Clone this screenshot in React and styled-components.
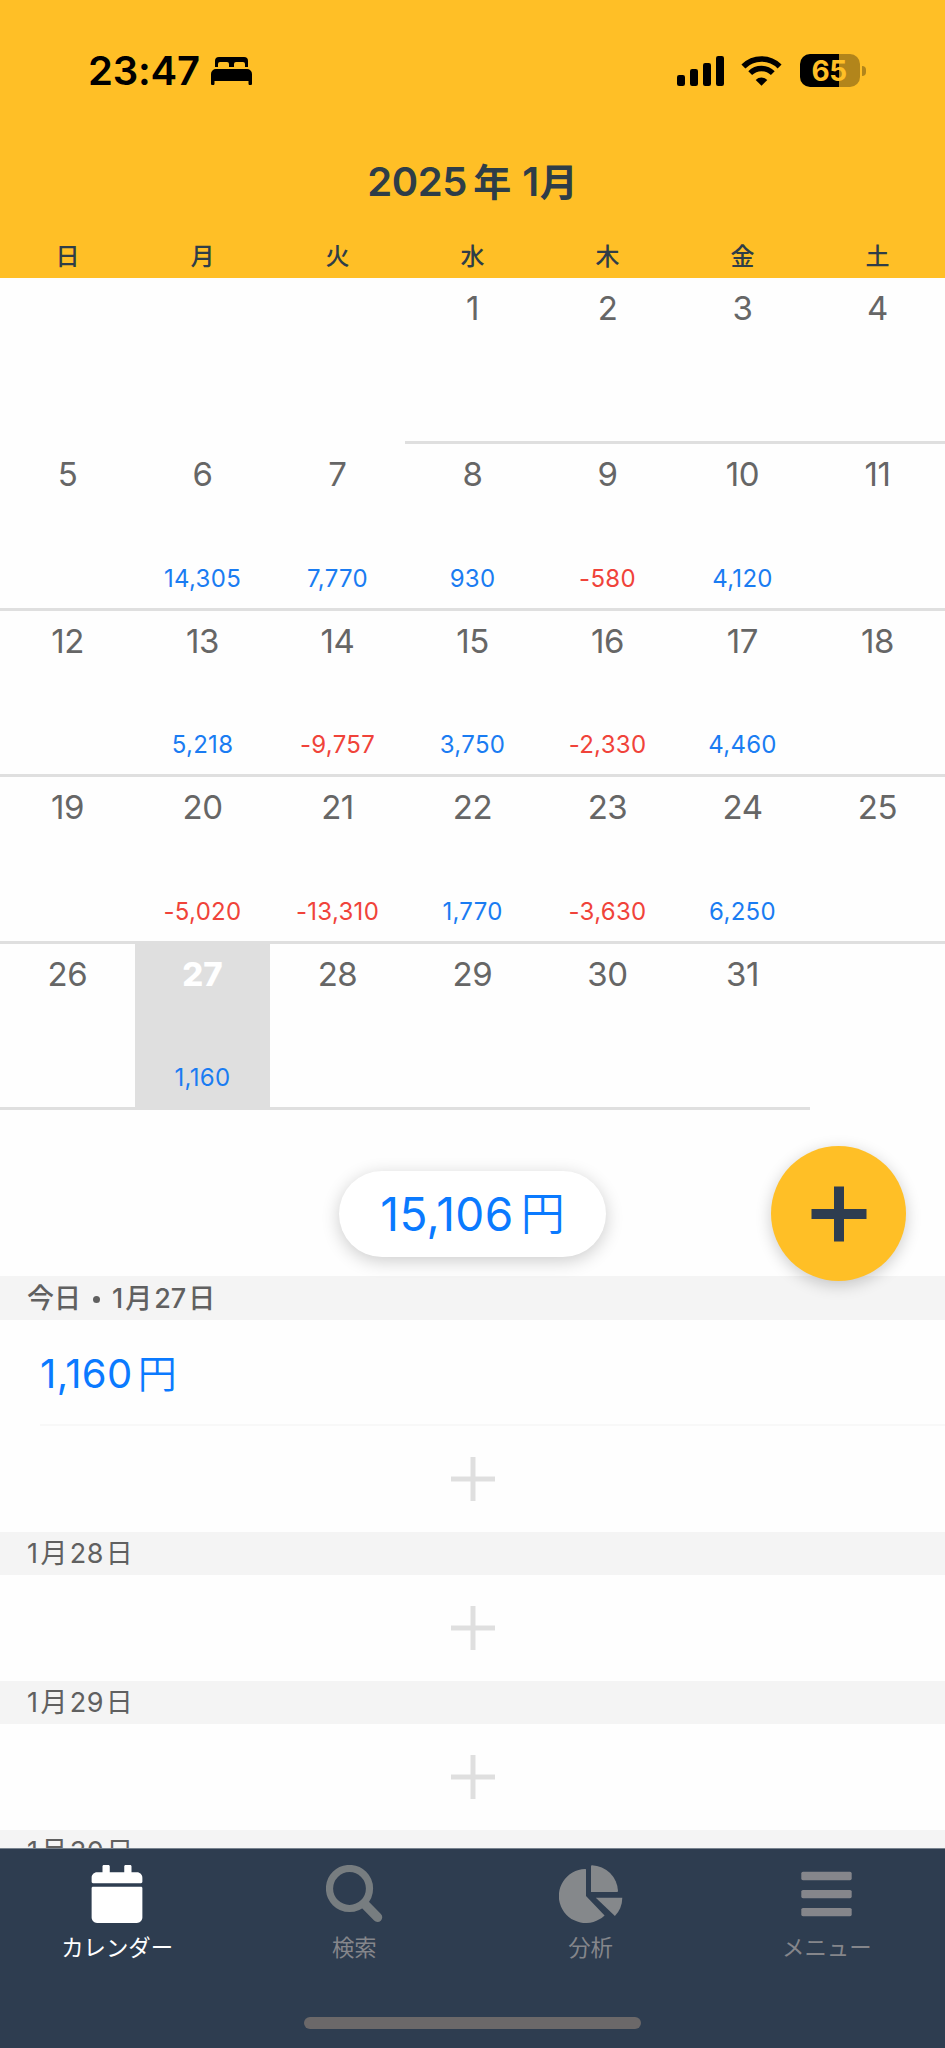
import React from 'react'
import styled, { createGlobalStyle } from 'styled-components'
import { FaCalendar } from 'react-icons/fa'

const weekdays = ['日', '月', '火', '水', '木', '金', '土']

const amounts = {
  6: 14305,
  7: 7770,
  8: 930,
  9: -580,
  10: 4120,
  13: 5218,
  14: -9757,
  15: 3750,
  16: -2330,
  17: 4460,
  20: -5020,
  21: -13310,
  22: 1770,
  23: -3630,
  24: 6250,
  27: 1160,
}

const today = 27
const firstWeekday = 3
const daysInMonth = 31

const cells = Array.from({ length: 35 }, (_, i) => {
  const day = i - firstWeekday + 1
  return day >= 1 && day <= daysInMonth ? day : null
})

const format = (n) => n.toLocaleString('en-US')

const BedIcon = () => (
  <svg width="41" height="28" viewBox="0 0 41 28">
    <path d="M4 10V4a4 4 0 0 1 4-4h25a4 4 0 0 1 4 4v6h-3V7a2 2 0 0 0-2-2h-7a2 2 0 0 0-2 2v3h-5V7a2 2 0 0 0-2-2H9a2 2 0 0 0-2 2v3z" />
    <path d="M0 17a5 5 0 0 1 5-5h31a5 5 0 0 1 5 5v9.500a1.500 1.500 0 0 1-3.500 0V24h-34v2.500a1.500 1.500 0 0 1-3.500 0z" />
  </svg>
)

const SignalIcon = () => (
  <svg width="47" height="30" viewBox="0 0 47 30">
    <rect x="0" y="19" width="8" height="11" rx="2.200" />
    <rect x="13" y="13" width="8" height="17" rx="2.200" />
    <rect x="26" y="7" width="8" height="23" rx="2.200" />
    <rect x="39" y="0" width="8" height="30" rx="2.200" />
  </svg>
)

const WifiIcon = () => (
  <svg width="41" height="30" viewBox="0 0 41 30">
    <path d="M2.400 10.400a25.700 25.700 0 0 1 36.200 0" fill="none" stroke="#000" strokeWidth="5.600" />
    <path d="M9.200 17.200a16 16 0 0 1 22.600 0" fill="none" stroke="#000" strokeWidth="5.400" />
    <path d="M20.500 29.800l-5.800-5.800a8.200 8.200 0 0 1 11.600 0z" />
  </svg>
)

const SearchIcon = () => (
  <svg width="57" height="58" viewBox="0 0 57 58" fill="none" stroke="#777d80">
    <circle cx="23.500" cy="23.500" r="20" strokeWidth="7.200" />
    <path d="M38.500 39L51.500 52.300" strokeWidth="9.500" strokeLinecap="round" />
  </svg>
)

const PieIcon = () => (
  <svg width="64" height="58" viewBox="0 0 64 58" fill="#85888b">
    <path d="M27 4.200V31l18.600 19.400A27 27 0 1 1 26 4z" />
    <path d="M32 1.200a1 1 0 0 1 1-1A27 27 0 0 1 59 26a1 1 0 0 1-1 1H32z" />
    <path d="M36.800 32.700h26.500a27 27 0 0 1-7.400 18.300z" />
  </svg>
)

const MenuIcon = () => (
  <svg width="51" height="58" viewBox="0 0 51 58" fill="#85868b">
    <rect x="0.300" y="6.800" width="50.400" height="8.400" rx="1.700" />
    <rect x="0.300" y="24.900" width="50.400" height="8.400" rx="1.700" />
    <rect x="0.300" y="42.900" width="50.400" height="8.400" rx="1.700" />
  </svg>
)

const StatusBar = () => (
  <Status>
    <StatusLeft>
      <Clock>23:47</Clock>
      <BedIcon />
    </StatusLeft>
    <StatusRight>
      <SignalIcon />
      <WifiIcon />
      <BatteryWrap>
        <Battery>65</Battery>
        <BatteryTip />
      </BatteryWrap>
    </StatusRight>
  </Status>
)

const Calendar = () => (
  <Grid>
    {cells.map((day, i) => (
      <Cell key={i} $filled={day !== null} $today={day === today}>
        <DayNumber $today={day === today}>{day}</DayNumber>
        {amounts[day] && <Amount $minus={amounts[day] < 0}>{format(amounts[day])}</Amount>}
      </Cell>
    ))}
  </Grid>
)

const DateLabel = ({ day }) => (
  <>
    1<Kanji>月</Kanji>
    {day}
    <Kanji>日</Kanji>
  </>
)

const App = () => {
  return (
    <Screen>
      <GlobalStyle />
      <Header>
        <StatusBar />
        <Title>
          2025<TitleYear>年</TitleYear>1<TitleMonth>月</TitleMonth>
        </Title>
        <Weekdays>
          {weekdays.map((d) => (
            <span key={d}>{d}</span>
          ))}
        </Weekdays>
      </Header>
      <Calendar />
      <TotalArea>
        <Total>
          15,106<TotalYen>円</TotalYen>
        </Total>
        <AddButton>
          <svg width="56" height="56" viewBox="0 0 56 56" stroke="#2e3d50" strokeWidth="10">
            <path d="M28 0.500v55M0.500 28h55" />
          </svg>
        </AddButton>
      </TotalArea>
      <List>
        <SectionTitle $today>
          今日<Dot />
          <DateLabel day={27} />
        </SectionTitle>
        <Entry>
          1,160<EntryYen>円</EntryYen>
        </Entry>
        <AddRow />
        <SectionTitle>
          <DateLabel day={28} />
        </SectionTitle>
        <AddRow />
        <SectionTitle>
          <DateLabel day={29} />
        </SectionTitle>
        <AddRow />
        <SectionTitle>
          <DateLabel day={30} />
        </SectionTitle>
      </List>
      <TabBar>
        <Tabs>
          <Tab $active>
            <FaCalendar size={58} />
            <span>カレンダー</span>
          </Tab>
          <Tab>
            <SearchIcon />
            <span>検索</span>
          </Tab>
          <Tab>
            <PieIcon />
            <span>分析</span>
          </Tab>
          <Tab>
            <MenuIcon />
            <span>メニュー</span>
          </Tab>
        </Tabs>
        <HomeIndicator />
      </TabBar>
    </Screen>
  )
}

const AddRow = () => (
  <EmptyRow>
    <svg width="44" height="44" viewBox="0 0 44 44" stroke="#dfdfdf" strokeWidth="5">
      <path d="M22 0v44M0 22h44" />
    </svg>
  </EmptyRow>
)

const GlobalStyle = createGlobalStyle`
  * {
    box-sizing: border-box;
  }
  body {
    margin: 0;
    background: #fefefe;
    font-family: Inter, 'Noto Sans CJK JP', sans-serif;
  }
  svg {
    display: block;
    flex-shrink: 0;
  }
`

const Screen = styled.div`
  display: flex;
  flex-direction: column;
  width: 945px;
  height: 2048px;
  overflow: hidden;
  background: #fefefe;
`

const Header = styled.header`
  display: flex;
  flex-direction: column;
  flex-shrink: 0;
  height: 278px;
  background: #ffbf26;
  color: #2e3d48;
`

const Status = styled.div`
  display: flex;
  flex-shrink: 0;
  justify-content: space-between;
  align-items: center;
  height: 141px;
  padding: 0 79px 0 88px;
  color: #000;
`

const StatusLeft = styled.div`
  display: flex;
  align-items: center;
  gap: 12px;
`

const Clock = styled.span`
  width: 111px;
  font-size: 40px;
  font-weight: 600;
  letter-spacing: -0.2px;
  line-height: 1;
  white-space: nowrap;
`

const StatusRight = styled.div`
  display: flex;
  align-items: center;
  gap: 17px;
`

const BatteryWrap = styled.div`
  display: flex;
  align-items: center;
  gap: 2px;
  margin-left: 1px;
`

const Battery = styled.span`
  display: flex;
  align-items: center;
  justify-content: center;
  width: 60px;
  height: 33px;
  border-radius: 10px;
  background: linear-gradient(to right, #000 39px, #b2851b 39px);
  color: #ffbf26;
  font-size: 28px;
  font-weight: 700;
  letter-spacing: -0.5px;
  line-height: 1;
  padding-right: 2px;
`

const BatteryTip = styled.span`
  width: 4px;
  height: 10px;
  border-radius: 0 5px 5px 0;
  background: #b2851b;
`

const Title = styled.h1`
  display: flex;
  flex-shrink: 0;
  align-items: center;
  justify-content: center;
  height: 82px;
  margin: 0;
  font-size: 40px;
  font-weight: 600;
  letter-spacing: -0.4px;
  line-height: 1;
`

const TitleYear = styled.span`
  margin: 0 11px 0 6px;
  font-size: 38px;
  letter-spacing: 0;
`

const TitleMonth = styled.span`
  margin-left: 1px;
  font-size: 38px;
  letter-spacing: 0;
`

const Weekdays = styled.div`
  display: grid;
  grid-template-columns: repeat(7, 1fr);
  align-items: center;
  height: 55px;
  padding-top: 12px;
  font-size: 24px;
  font-weight: 500;
  line-height: 1;
  text-align: center;
`

const Grid = styled.main`
  display: grid;
  flex-shrink: 0;
  grid-template-columns: repeat(7, 1fr);
  grid-template-rows: repeat(5, 1fr);
  height: 832px;
`

const Cell = styled.div`
  display: flex;
  flex-direction: column;
  align-items: center;
  justify-content: space-between;
  padding: 13px 0 17px;
  border-bottom: 3px solid ${(p) => (p.$filled ? '#dfdfdf' : 'transparent')};
  background: ${(p) => (p.$today ? '#dfdfdf' : 'transparent')};
`

const DayNumber = styled.span`
  height: 34px;
  color: ${(p) => (p.$today ? '#fff' : '#666')};
  font-size: 33px;
  font-weight: ${(p) => (p.$today ? 800 : 400)};
  letter-spacing: ${(p) => (p.$today ? 0 : '-0.4px')};
  line-height: 34px;
`

const Amount = styled.span`
  color: ${(p) => (p.$minus ? '#f0433a' : '#1a7cf2')};
  font-size: 24px;
  letter-spacing: 0.3px;
  line-height: 24px;
`

const TotalArea = styled.section`
  display: grid;
  flex-shrink: 0;
  grid-template-columns: 1fr 267px 1fr;
  align-items: center;
  height: 166px;
  padding-top: 41px;
  position: relative;
  z-index: 1;
`

const Total = styled.div`
  display: flex;
  grid-column: 2;
  align-items: center;
  justify-content: center;
  height: 86px;
  margin-bottom: 20px;
  border-radius: 43px;
  background: #fff;
  box-shadow: 0 4px 18px rgba(0, 0, 0, 0.2);
  color: #0a7aff;
  font-size: 46px;
  letter-spacing: 0.4px;
  line-height: 1;
`

const TotalYen = styled.span`
  margin-left: 7px;
  font-size: 44px;
  font-weight: 350;
  letter-spacing: 0;
`

const AddButton = styled.button`
  display: flex;
  align-items: center;
  justify-content: center;
  justify-self: end;
  width: 135px;
  height: 135px;
  margin: -5px 39px 15px 0;
  padding: 0;
  border: none;
  border-radius: 50%;
  background: #ffbf26;
  box-shadow: 0 4px 16px rgba(0, 0, 0, 0.2);
`

const List = styled.section`
  flex: 1;
  min-height: 0;
  overflow: hidden;
`

const SectionTitle = styled.h2`
  display: flex;
  align-items: center;
  height: ${(p) => (p.$today ? 44 : 43)}px;
  margin: 0;
  padding-left: 27px;
  background: #f4f4f4;
  color: #606060;
  font-size: 27px;
  font-weight: ${(p) => (p.$today ? 500 : 400)};
  letter-spacing: ${(p) => (p.$today ? 0 : '0.4px')};
  line-height: 1;
`

const Kanji = styled.span`
  margin: 0 2px;
`

const Dot = styled.span`
  width: 7px;
  height: 7px;
  margin: 2px 12px 0;
  border-radius: 50%;
  background: #606060;
`

const Entry = styled.div`
  display: flex;
  align-items: center;
  height: 106px;
  margin-left: 40px;
  padding-top: 3px;
  border-bottom: 2px solid #f8f8f8;
  color: #0a7aff;
  font-size: 40px;
  letter-spacing: 0.4px;
  line-height: 1;
`

const EntryYen = styled.span`
  margin-left: 5px;
  font-size: 39px;
  font-weight: 350;
`

const EmptyRow = styled.div`
  display: flex;
  align-items: center;
  justify-content: center;
  height: 106px;
`

const TabBar = styled.footer`
  display: flex;
  flex-direction: column;
  justify-content: space-between;
  align-items: center;
  flex-shrink: 0;
  height: 200px;
  padding: 16px 0 19px;
  border-top: 1px solid #77828e;
  background: #2e3d50;
`

const Tabs = styled.nav`
  display: grid;
  grid-template-columns: repeat(4, 1fr);
  width: 100%;
`

const Tab = styled.div`
  display: flex;
  flex-direction: column;
  align-items: center;
  gap: 14px;
  margin-right: ${(p) => (p.$active ? 2 : 0)}px;
  color: ${(p) => (p.$active ? '#fff' : '#85868b')};
  font-size: 22.4px;
  line-height: 22px;
`

const HomeIndicator = styled.div`
  width: 337px;
  height: 12px;
  border-radius: 6px;
  background: #6b6869;
`

export default App
